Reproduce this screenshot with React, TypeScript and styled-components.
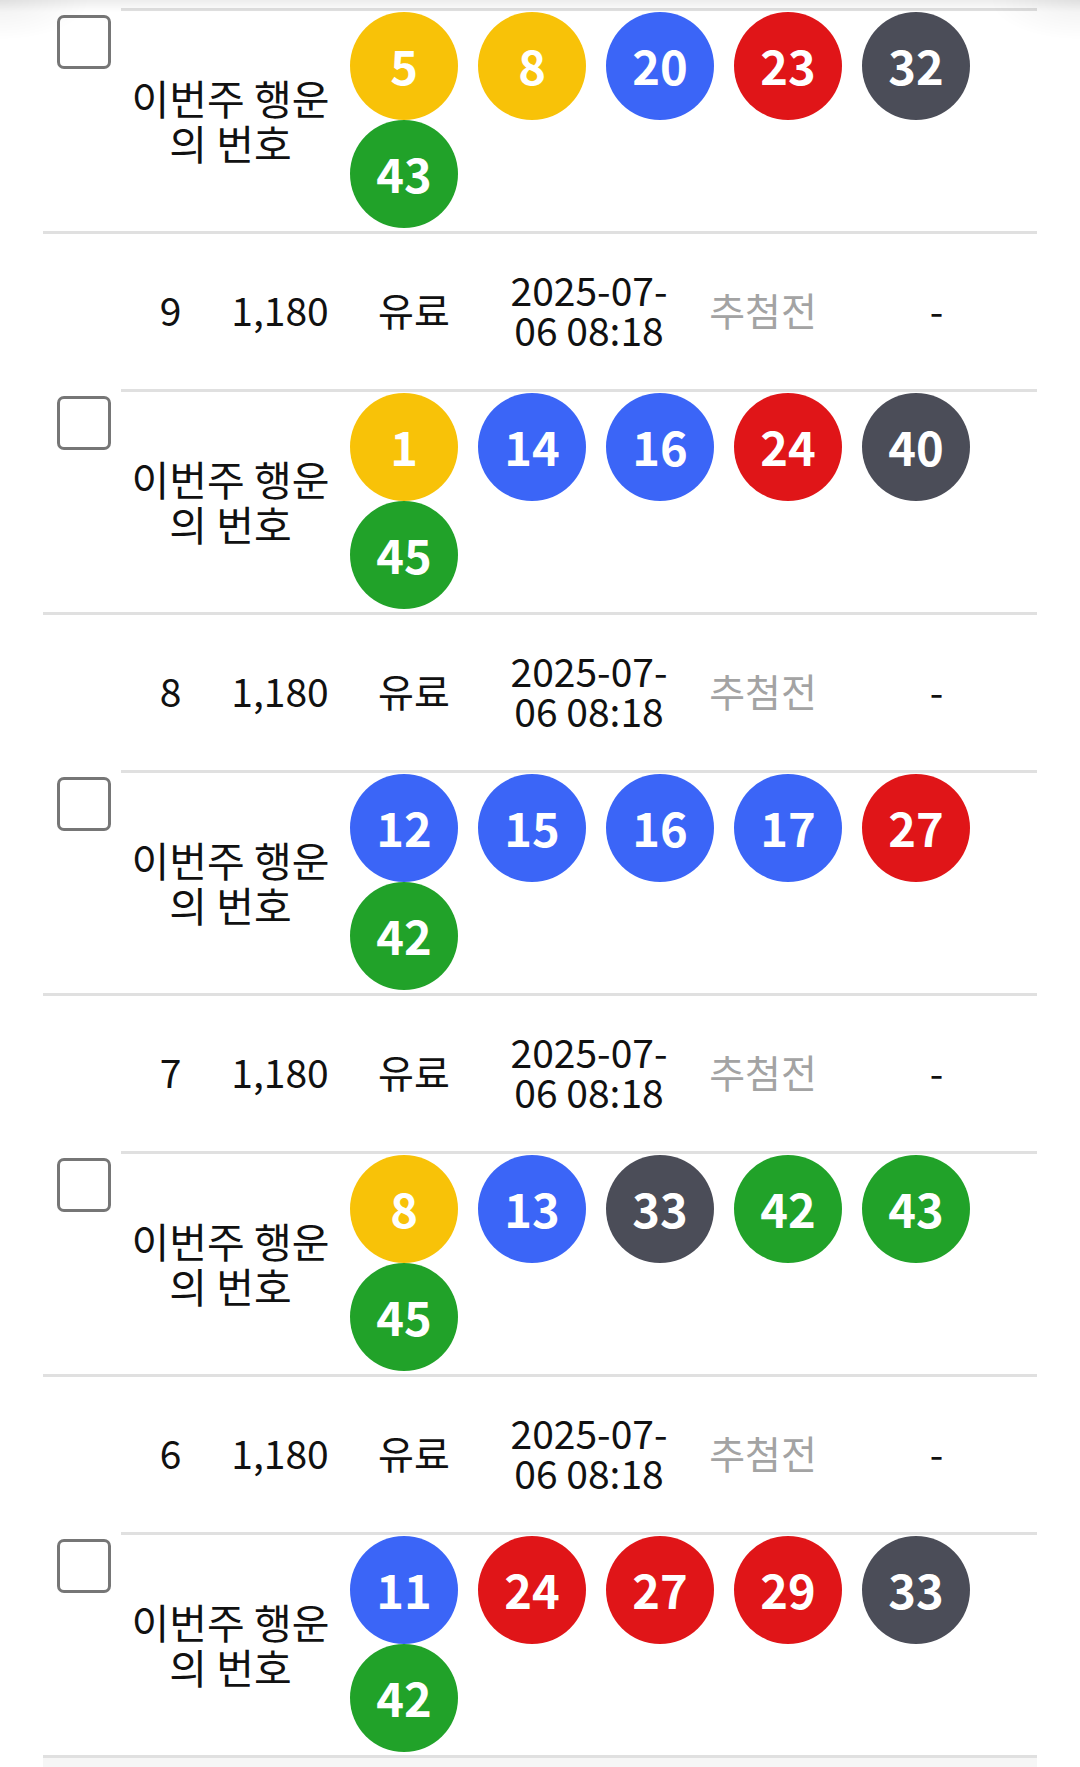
import styled, { createGlobalStyle } from "styled-components";

interface Ticket {
    no?: number
    amount?: string
    kind?: string
    date?: string
    status?: string
    result?: string
    numbers: number[]
}

const tickets: Ticket[] = [
    { numbers: [5, 8, 20, 23, 32, 43] },
    { no: 9, amount: "1,180", kind: "유료", date: "2025-07-06 08:18", status: "추첨전", result: "-", numbers: [1, 14, 16, 24, 40, 45] },
    { no: 8, amount: "1,180", kind: "유료", date: "2025-07-06 08:18", status: "추첨전", result: "-", numbers: [12, 15, 16, 17, 27, 42] },
    { no: 7, amount: "1,180", kind: "유료", date: "2025-07-06 08:18", status: "추첨전", result: "-", numbers: [8, 13, 33, 42, 43, 45] },
    { no: 6, amount: "1,180", kind: "유료", date: "2025-07-06 08:18", status: "추첨전", result: "-", numbers: [11, 24, 27, 29, 33, 42] },
]

function ballColor(n: number) {
    if (n <= 10) return '#F8C208'
    if (n <= 20) return '#3B65F7'
    if (n <= 30) return '#E01518'
    if (n <= 40) return '#4B4D58'
    return '#21A229'
}

export default function App() {
    return <>
        <GlobalStyle />
        <TopShade />
        <List>
            {tickets.map((t, i) =>
                <div key={i}>
                    {t.no !== undefined &&
                        <InfoRow>
                            <span />
                            <Cell>{t.no}</Cell>
                            <Cell>{t.amount}</Cell>
                            <Cell>{t.kind}</Cell>
                            <Cell><DateText>{t.date}</DateText></Cell>
                            <Cell $muted>{t.status}</Cell>
                            <Cell>{t.result}</Cell>
                        </InfoRow>
                    }
                    <BallRow>
                        <CheckCell>
                            <CheckBox type="checkbox" />
                        </CheckCell>
                        <BallContent>
                            <Label>이번주 행운의 번호</Label>
                            <Balls>
                                {t.numbers.map((n, j) =>
                                    <Ball key={j} $color={ballColor(n)}>{n}</Ball>
                                )}
                            </Balls>
                        </BallContent>
                    </BallRow>
                </div>
            )}
            <Footer />
        </List>
    </>
}

const GlobalStyle = createGlobalStyle`
    body {
        margin: 0;
        background: #fff;
        font-family: "Noto Sans CJK KR", "Noto Sans", sans-serif;
        color: #111;
    }
`

const TopShade = styled.div`
    position: fixed;
    top: 0;
    left: 0;
    right: 0;
    height: 40px;
    pointer-events: none;
    background:
        radial-gradient(ellipse 90px 40px at 0 0, rgba(0, 0, 0, 0.06), transparent),
        radial-gradient(ellipse 90px 40px at 100% 0, rgba(0, 0, 0, 0.06), transparent),
        linear-gradient(rgba(0, 0, 0, 0.07), rgba(0, 0, 0, 0) 12px);
`

const List = styled.div`
    margin: 8px 43px 0;
`

const InfoRow = styled.div`
    display: grid;
    grid-template-columns: 78px 99px 120px 148px 202px 146px 1fr;
    align-items: center;
    height: 158px;
    box-sizing: border-box;
    border-top: 3px solid #e0e0e0;
    padding-bottom: 6px;
    font-size: 39px;
    line-height: 40px;
`

const Cell = styled.div<{ $muted?: boolean }>`
    display: flex;
    justify-content: center;
    text-align: center;
    color: ${p => p.$muted ? '#a3a3a3' : '#111'};
`

const DateText = styled.div`
    width: 170px;
    word-break: break-all;
`

const BallRow = styled.div`
    display: grid;
    grid-template-columns: 78px 1fr;
`

const CheckCell = styled.div`
    padding: 7px 0 0 14px;
`

const CheckBox = styled.input`
    appearance: none;
    display: block;
    margin: 0;
    width: 54px;
    height: 54px;
    box-sizing: border-box;
    border: 3px solid #767676;
    border-radius: 7px;
    background: #fff;
`

const BallContent = styled.div`
    display: flex;
    align-items: center;
    border-top: 3px solid #e0e0e0;
    padding: 1px 0 3px;
`

const Label = styled.div`
    width: 229px;
    box-sizing: border-box;
    padding-right: 10px;
    flex-shrink: 0;
    text-align: center;
    font-size: 41px;
    line-height: 45px;
    color: #111;
`

const Balls = styled.div`
    display: flex;
    flex-wrap: wrap;
    column-gap: 20px;
    flex: 1;
`

const Ball = styled.div<{ $color: string }>`
    width: 108px;
    height: 108px;
    border-radius: 50%;
    background: ${p => p.$color};
    color: #fff;
    display: flex;
    align-items: center;
    justify-content: center;
    padding-bottom: 3px;
    box-sizing: border-box;
    font-size: 47px;
    font-weight: 700;
    line-height: 1;
`

const Footer = styled.div`
    height: 20px;
    border-top: 3px solid #e0e0e0;
    background: #f6f6f6;
`
